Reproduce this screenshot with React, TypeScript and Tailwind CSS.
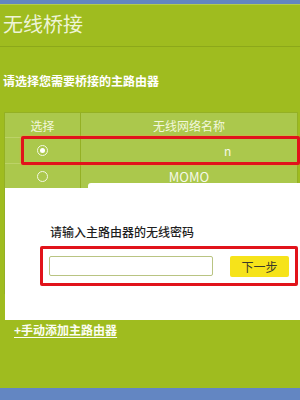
const font = { fontFamily: '"Noto Sans CJK SC", "Liberation Sans", sans-serif' }

const rows = [
  { name: 'n', selected: true },
  { name: 'MOMO', selected: false },
  { name: '', selected: false },
  { name: '', selected: false },
  { name: '', selected: false },
  { name: '', selected: false },
]

function Radio({ on }: { on: boolean }) {
  return (
    <span className="flex size-[11px] items-center justify-center rounded-full border-[1.5px] border-[#f4f8e4]">
      {on && <span className="size-[5px] rounded-full bg-white" />}
    </span>
  )
}

export default function App() {
  return (
    <div style={font} className="flex h-[400px] w-[300px] flex-col overflow-hidden bg-[#9fbc1f]">
      <div className="h-[4px] bg-[#6386c2]" />
      <div className="h-px bg-[#b3cb4c]" />

      <h1 className="h-[41px] pl-[3px] pt-[7px] text-[20px] leading-[24px] text-[#eef4d6]">无线桥接</h1>
      <div className="h-px bg-[#8ca81a]" />

      <p className="mt-[26px] pl-[3px] text-[12px] font-bold leading-[16px] text-white">
        请选择您需要桥接的主路由器
      </p>

      <div className="relative mt-[23px] h-[208px]">
        <div className="ml-[4px] w-[294px] border-l border-r border-t border-[#94b024] bg-[#abc84c]">
          <div className="flex h-[25px] border-b border-[#bcd267] text-[12px] leading-[25px] text-[#f2f7dc]">
            <div className="w-[76px] border-r border-[#94b024] text-center">选择</div>
            <div className="flex-1 text-center">无线网络名称</div>
          </div>
          {rows.map((r, i) => (
            <div key={i} className="flex h-[26px] border-b border-[#bcd267] text-[13px] text-[#f6f9e8]">
              <div className="flex w-[76px] items-center justify-center border-r border-[#94b024]">
                <Radio on={r.selected} />
              </div>
              <div
                className={
                  r.selected
                    ? 'flex flex-1 items-center pl-[143px] text-[12px]'
                    : 'flex flex-1 items-center justify-center'
                }
              >
                {r.name}
              </div>
            </div>
          ))}
        </div>

        <div className="absolute left-[21px] top-[24px] h-[29px] w-[279px] rounded-[2px] border-[3px] border-[#e1131b] shadow-[0_0_2px_#f59a3c]" />

        <div className="absolute left-[88px] top-[71px] h-[6px] w-[212px] rounded-tl-[3px] bg-white" />
        <div className="absolute left-[5px] top-[76px] h-[132px] w-[295px] bg-white">
          <p className="ml-[45px] mt-[36px] text-[12px] font-medium leading-[16px] text-[#1f1f1f]">
            请输入主路由器的无线密码
          </p>
          <div className="ml-[35px] mt-[6px] flex h-[40px] w-[258px] items-center rounded-[2px] border-[3px] border-[#e1131b] pl-[6px]">
            <input className="h-[20px] w-[164px] rounded-[2px] border border-[#b9c482] bg-white outline-none" />
            <button className="ml-[17px] h-[21px] w-[59px] rounded-[2px] bg-[#f6e31a] text-[12px] leading-[21px] text-[#3a3a2a]">
              下一步
            </button>
          </div>
        </div>
      </div>

      <a className="mt-[2px] pl-[14px] text-[12px] font-bold leading-[16px] text-[#fbfdf2] underline underline-offset-2">
        +手动添加主路由器
      </a>

      <div className="flex-1" />
      <div className="h-[12px] bg-[#6386c2]" />
    </div>
  )
}
